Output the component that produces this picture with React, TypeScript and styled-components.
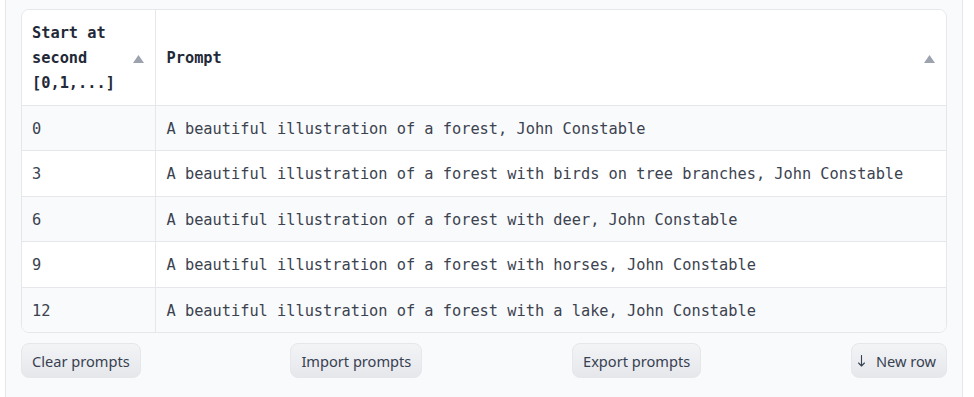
import React from "react";
import styled, { createGlobalStyle } from "styled-components";

const Global = createGlobalStyle`
  html, body { margin: 0; padding: 0; background: #ffffff; }
  * { box-sizing: border-box; }
`;

const Panel = styled.div`
  margin-left: 5px;
  width: 958px;
  height: 397px;
  background: #f9fafb;
  border-left: 1px solid #e5e7eb;
  border-right: 1px solid #e5e7eb;
  padding: 9px 15px 0 15px;
`;

const Card = styled.div`
  border: 1px solid #e5e7eb;
  border-radius: 8px;
  overflow: hidden;
  background: #ffffff;
`;

const Table = styled.table`
  width: 100%;
  border-collapse: collapse;
  table-layout: fixed;
  font-family: "DejaVu Sans Mono", "Liberation Mono", monospace;
  font-size: 15.3px;
  color: #3b4250;
`;

const Th = styled.th<{ $w?: number; $last?: boolean }>`
  ${(p) => (p.$w ? `width: ${p.$w}px;` : "")}
  text-align: left;
  vertical-align: middle;
  padding: 11px 10px 9px ${(p) => (p.$last ? 11 : 10)}px;
  line-height: 25px;
  font-weight: 700;
  color: #1f2937;
  background: #ffffff;
  border-bottom: 1px solid #e5e7eb;
  ${(p) => (!p.$last ? "border-right: 1px solid #e5e7eb;" : "")}
`;

const HeadInner = styled.div`
  display: flex;
  align-items: center;
  justify-content: space-between;
  gap: 8px;
`;

const Label = styled.span`
  flex: 1;
`;

const SortIcon = styled.svg`
  flex: none;
  width: 11px;
  height: 8px;
  margin-right: 1px;
`;

const Tr = styled.tr<{ $alt: boolean }>`
  background: ${(p) => (p.$alt ? "#f9fafb" : "#ffffff")};
  &:not(:last-child) td { border-bottom: 1px solid #e5e7eb; }
`;

const Td = styled.td<{ $last?: boolean }>`
  padding: 11px 10px 9px ${(p) => (p.$last ? 11 : 10)}px;
  line-height: 24.4px;
  white-space: nowrap;
  ${(p) => (!p.$last ? "border-right: 1px solid #e5e7eb;" : "")}
`;

const Actions = styled.div`
  display: flex;
  justify-content: space-between;
  margin-top: 10px;
`;

const Button = styled.button<{ $icon?: boolean }>`
  height: 35px;
  padding: 0 10px 0 ${(p) => (p.$icon ? 6 : 10)}px;
  border: 1px solid #e5e7eb;
  border-radius: 8px;
  background: linear-gradient(to bottom, #f3f4f6, #e5e7eb);
  color: #374151;
  font-family: "Noto Sans", "Open Sans", sans-serif;
  font-size: 14.6px;
  display: inline-flex;
  align-items: center;
  gap: 11px;
  cursor: pointer;
`;

const ArrowIcon = styled.svg`
  width: 7px;
  height: 12px;
  flex: none;
`;

const rows: [string, string][] = [
  ["0", "A beautiful illustration of a forest, John Constable"],
  ["3", "A beautiful illustration of a forest with birds on tree branches, John Constable"],
  ["6", "A beautiful illustration of a forest with deer, John Constable"],
  ["9", "A beautiful illustration of a forest with horses, John Constable"],
  ["12", "A beautiful illustration of a forest with a lake, John Constable"],
];

const Sort = () => (
  <SortIcon viewBox="0 0 11 8">
    <path d="M5.5 0 L11 8 L0 8 Z" fill="#9ca3af" />
  </SortIcon>
);

export default function App() {
  return (
    <>
      <Global />
      <Panel>
        <Card>
          <Table>
            <thead>
              <tr>
                <Th $w={133}>
                  <HeadInner>
                    <Label>Start at second [0,1,...]</Label>
                    <Sort />
                  </HeadInner>
                </Th>
                <Th $last>
                  <HeadInner>
                    <Label>Prompt</Label>
                    <Sort />
                  </HeadInner>
                </Th>
              </tr>
            </thead>
            <tbody>
              {rows.map((r, i) => (
                <Tr key={i} $alt={i % 2 === 0}>
                  <Td>{r[0]}</Td>
                  <Td $last>{r[1]}</Td>
                </Tr>
              ))}
            </tbody>
          </Table>
        </Card>
        <Actions>
          <Button>Clear prompts</Button>
          <Button>Import prompts</Button>
          <Button>Export prompts</Button>
          <Button $icon>
            <ArrowIcon viewBox="0 0 7 12">
              <path
                d="M3.5 0.5 V11 M0.6 8 L3.5 11 L6.4 8"
                fill="none"
                stroke="#374151"
                strokeWidth="1.1"
                strokeLinecap="round"
                strokeLinejoin="round"
              />
            </ArrowIcon>
            New row
          </Button>
        </Actions>
      </Panel>
    </>
  );
}
